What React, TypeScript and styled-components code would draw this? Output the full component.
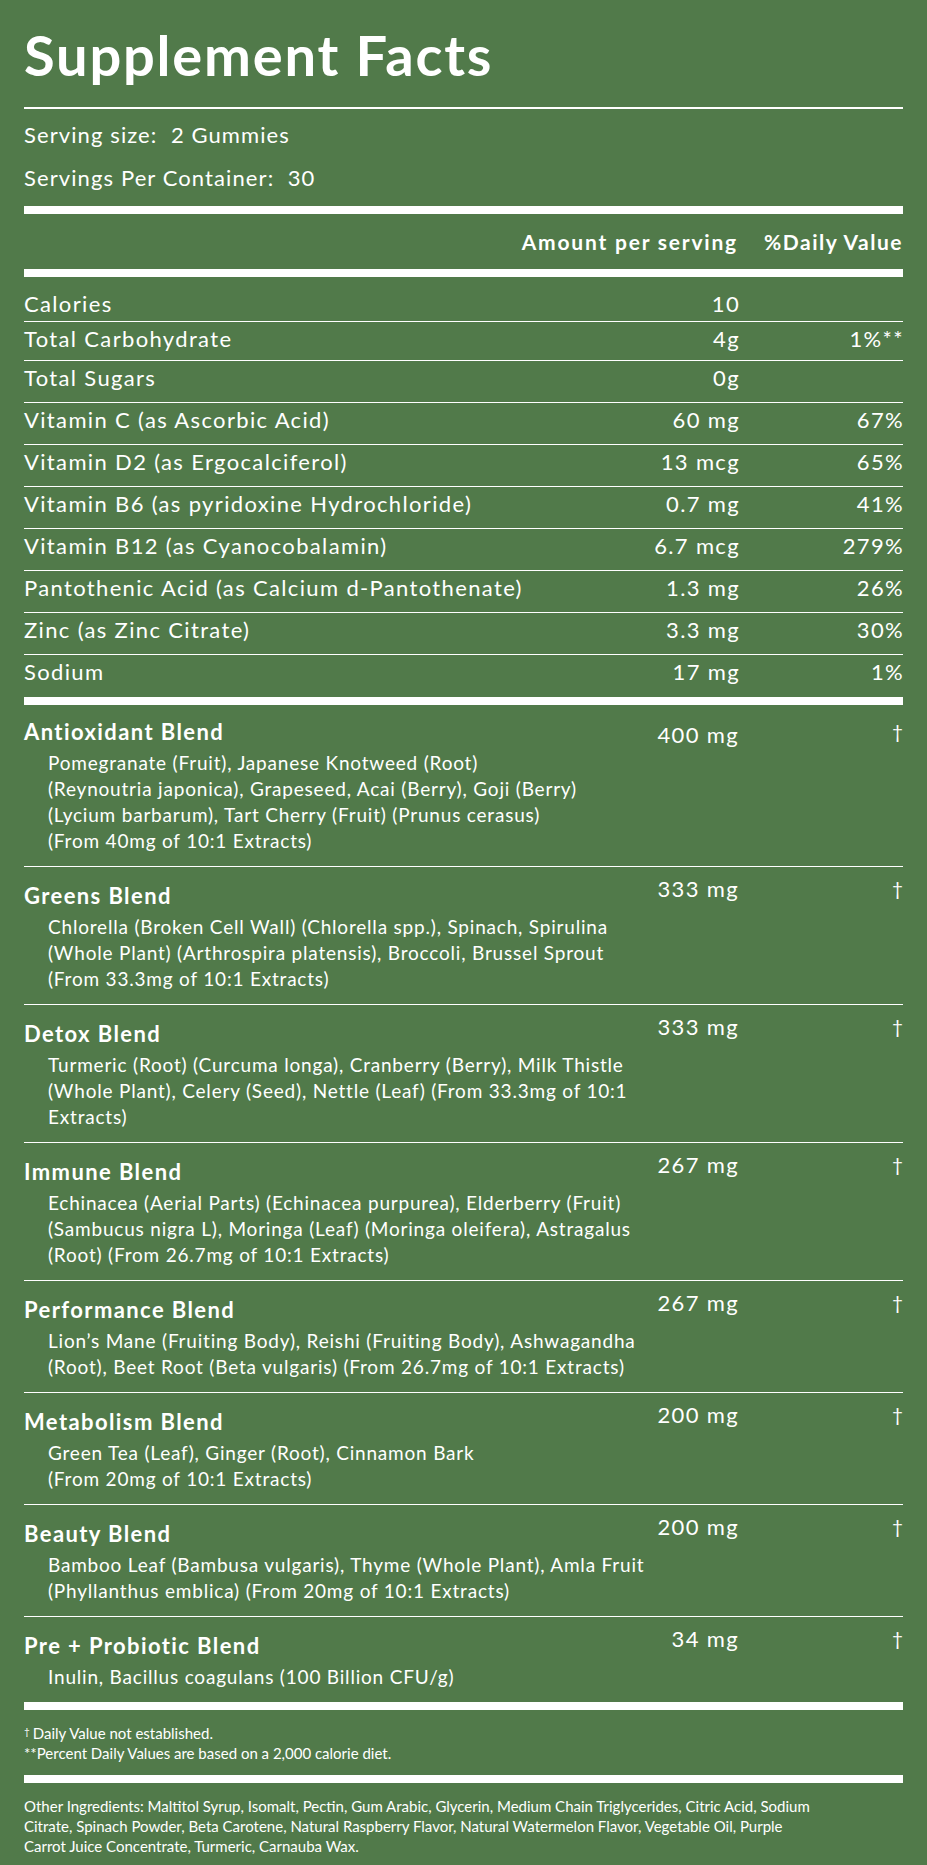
import React from "react";
import styled, { createGlobalStyle } from "styled-components";

const GREEN = "#517a4a";

const GlobalStyle = createGlobalStyle`
  html, body { margin: 0; padding: 0; background: ${GREEN}; }
  body { font-family: Lato, "Open Sans", sans-serif; color: #fff; }
  * { box-sizing: border-box; }
`;

const Panel = styled.main`
  width: 927px;
  min-height: 1865px;
  padding: 28px 24px 10px;
  background: ${GREEN};
`;

const Title = styled.h1`
  margin: 0 0 25px;
  font-size: 56px;
  line-height: 54px;
  font-weight: 700;
  letter-spacing: 1.8px;
`;

const Rule = styled.div<{ $weight: number }>`
  height: ${(p) => p.$weight}px;
  background: #fff;
`;

const ServingBlock = styled.section`
  display: flex;
  flex-direction: column;
  gap: 17px;
  padding: 13px 0 15px;
`;

const ServingLine = styled.div`
  font-size: 22px;
  line-height: 26px;
  letter-spacing: 1.1px;
  white-space: pre;
`;

const HeaderRow = styled.div`
  display: flex;
  justify-content: flex-end;
  padding: 15px 0 14px;
  font-size: 21px;
  line-height: 26px;
  font-weight: 700;
  letter-spacing: 1.8px;
`;

const DVHead = styled.div`
  width: 165px;
  text-align: right;
  letter-spacing: 1.5px;
`;

const NutrientRow = styled.div<{ $first?: boolean; $tight?: boolean }>`
  display: flex;
  align-items: flex-start;
  font-size: 22px;
  line-height: 26px;
  letter-spacing: 1.35px;
  padding: ${(p) => (p.$first ? "14px 0 4px" : p.$tight ? "4px 0 8px" : "4px 0 11px")};
  border-bottom: 1px solid #fff;
  &:last-child {
    border-bottom: 0;
    padding-bottom: 12px;
  }
`;

const Label = styled.div`
  flex: 1;
  white-space: nowrap;
`;

const Amount = styled.div`
  width: 150px;
  text-align: right;
  margin-right: -1px;
`;

const DV = styled.div`
  width: 165px;
  text-align: right;
  margin-right: -1px;
`;

const Blend = styled.div<{ $first?: boolean }>`
  display: grid;
  grid-template-columns: 1fr auto 165px;
  align-items: start;
  padding: ${(p) => (p.$first ? "12px" : "7px")} 0 12px;
  border-bottom: 1px solid #fff;
  &:last-child {
    border-bottom: 0;
  }
`;

const BlendText = styled.div<{ $first?: boolean }>`
  margin-top: ${(p) => (p.$first ? 0 : 7)}px;
`;

const BlendName = styled.div`
  font-size: 22px;
  line-height: 30px;
  font-weight: 700;
  letter-spacing: 1.4px;
`;

const BlendSources = styled.div`
  margin-top: 3px;
  padding-left: 24px;
  font-size: 19px;
  line-height: 26px;
  letter-spacing: 0.8px;
`;

const SourceLine = styled.div`
  white-space: nowrap;
`;

const BlendAmount = styled.div<{ $first?: boolean }>`
  margin-top: ${(p) => (p.$first ? 3 : 0)}px;
  margin-right: -1px;
  font-size: 22px;
  line-height: 30px;
  letter-spacing: 1.35px;
  text-align: right;
  white-space: nowrap;
`;

const Dagger = styled.div`
  font-size: 19px;
  line-height: 30px;
  text-align: right;
`;

const Footnotes = styled.section`
  padding: 11px 0 12px;
  font-size: 15px;
  line-height: 20px;
`;

const SmallMark = styled.span`
  font-size: 10px;
  vertical-align: 4px;
  margin-right: 3px;
`;

const Ingredients = styled.section`
  padding: 13px 0 0;
  font-size: 15px;
  line-height: 20px;
`;

const nutrients: [string, string, string][] = [
  ["Calories", "10", ""],
  ["Total Carbohydrate", "4g", "1%**"],
  ["Total Sugars", "0g", ""],
  ["Vitamin C (as Ascorbic Acid)", "60 mg", "67%"],
  ["Vitamin D2 (as Ergocalciferol)", "13 mcg", "65%"],
  ["Vitamin B6 (as pyridoxine Hydrochloride)", "0.7 mg", "41%"],
  ["Vitamin B12 (as Cyanocobalamin)", "6.7 mcg", "279%"],
  ["Pantothenic Acid (as Calcium d-Pantothenate)", "1.3 mg", "26%"],
  ["Zinc (as Zinc Citrate)", "3.3 mg", "30%"],
  ["Sodium", "17 mg", "1%"],
];

const blends: { name: string; amount: string; lines: string[] }[] = [
  {
    name: "Antioxidant Blend",
    amount: "400 mg",
    lines: [
      "Pomegranate (Fruit), Japanese Knotweed (Root)",
      "(Reynoutria japonica), Grapeseed, Acai (Berry), Goji (Berry)",
      "(Lycium barbarum), Tart Cherry (Fruit) (Prunus cerasus)",
      "(From 40mg of 10:1 Extracts)",
    ],
  },
  {
    name: "Greens Blend",
    amount: "333 mg",
    lines: [
      "Chlorella (Broken Cell Wall) (Chlorella spp.), Spinach, Spirulina",
      "(Whole Plant) (Arthrospira platensis), Broccoli, Brussel Sprout",
      "(From 33.3mg of 10:1 Extracts)",
    ],
  },
  {
    name: "Detox Blend",
    amount: "333 mg",
    lines: [
      "Turmeric (Root) (Curcuma longa), Cranberry (Berry), Milk Thistle",
      "(Whole Plant), Celery (Seed), Nettle (Leaf) (From 33.3mg of 10:1",
      "Extracts)",
    ],
  },
  {
    name: "Immune Blend",
    amount: "267 mg",
    lines: [
      "Echinacea (Aerial Parts) (Echinacea purpurea), Elderberry (Fruit)",
      "(Sambucus nigra L), Moringa (Leaf) (Moringa oleifera), Astragalus",
      "(Root) (From 26.7mg of 10:1 Extracts)",
    ],
  },
  {
    name: "Performance Blend",
    amount: "267 mg",
    lines: [
      "Lion\u2019s Mane (Fruiting Body), Reishi (Fruiting Body), Ashwagandha",
      "(Root), Beet Root (Beta vulgaris) (From 26.7mg of 10:1 Extracts)",
    ],
  },
  {
    name: "Metabolism Blend",
    amount: "200 mg",
    lines: ["Green Tea (Leaf), Ginger (Root), Cinnamon Bark", "(From 20mg of 10:1 Extracts)"],
  },
  {
    name: "Beauty Blend",
    amount: "200 mg",
    lines: [
      "Bamboo Leaf (Bambusa vulgaris), Thyme (Whole Plant), Amla Fruit",
      "(Phyllanthus emblica) (From 20mg of 10:1 Extracts)",
    ],
  },
  {
    name: "Pre + Probiotic Blend",
    amount: "34 mg",
    lines: ["Inulin, Bacillus coagulans (100 Billion CFU/g)"],
  },
];

const otherIngredients = [
  "Other Ingredients: Maltitol Syrup, Isomalt, Pectin, Gum Arabic, Glycerin, Medium Chain Triglycerides, Citric Acid, Sodium",
  "Citrate, Spinach Powder, Beta Carotene, Natural Raspberry Flavor, Natural Watermelon Flavor, Vegetable Oil, Purple",
  "Carrot Juice Concentrate, Turmeric, Carnauba Wax.",
];

export default function App() {
  return (
    <>
      <GlobalStyle />
      <Panel>
        <Title>Supplement Facts</Title>
        <Rule $weight={2} />
        <ServingBlock>
          <ServingLine>{"Serving size:  2 Gummies"}</ServingLine>
          <ServingLine>{"Servings Per Container:  30"}</ServingLine>
        </ServingBlock>
        <Rule $weight={8} />
        <HeaderRow>
          <div>Amount per serving</div>
          <DVHead>%Daily Value</DVHead>
        </HeaderRow>
        <Rule $weight={8} />
        <div>
          {nutrients.map(([label, amount, dv], i) => (
            <NutrientRow key={label} $first={i === 0} $tight={i === 1}>
              <Label>{label}</Label>
              <Amount>{amount}</Amount>
              <DV>{dv}</DV>
            </NutrientRow>
          ))}
        </div>
        <Rule $weight={8} />
        <div>
          {blends.map((b, i) => (
            <Blend key={b.name} $first={i === 0}>
              <BlendText $first={i === 0}>
                <BlendName>{b.name}</BlendName>
                <BlendSources>
                  {b.lines.map((l) => (
                    <SourceLine key={l}>{l}</SourceLine>
                  ))}
                </BlendSources>
              </BlendText>
              <BlendAmount $first={i === 0}>{b.amount}</BlendAmount>
              <Dagger>†</Dagger>
            </Blend>
          ))}
        </div>
        <Rule $weight={8} />
        <Footnotes>
          <div>
            <SmallMark>†</SmallMark>Daily Value not established.
          </div>
          <div>**Percent Daily Values are based on a 2,000 calorie diet.</div>
        </Footnotes>
        <Rule $weight={8} />
        <Ingredients>
          {otherIngredients.map((l) => (
            <SourceLine key={l}>{l}</SourceLine>
          ))}
        </Ingredients>
      </Panel>
    </>
  );
}
